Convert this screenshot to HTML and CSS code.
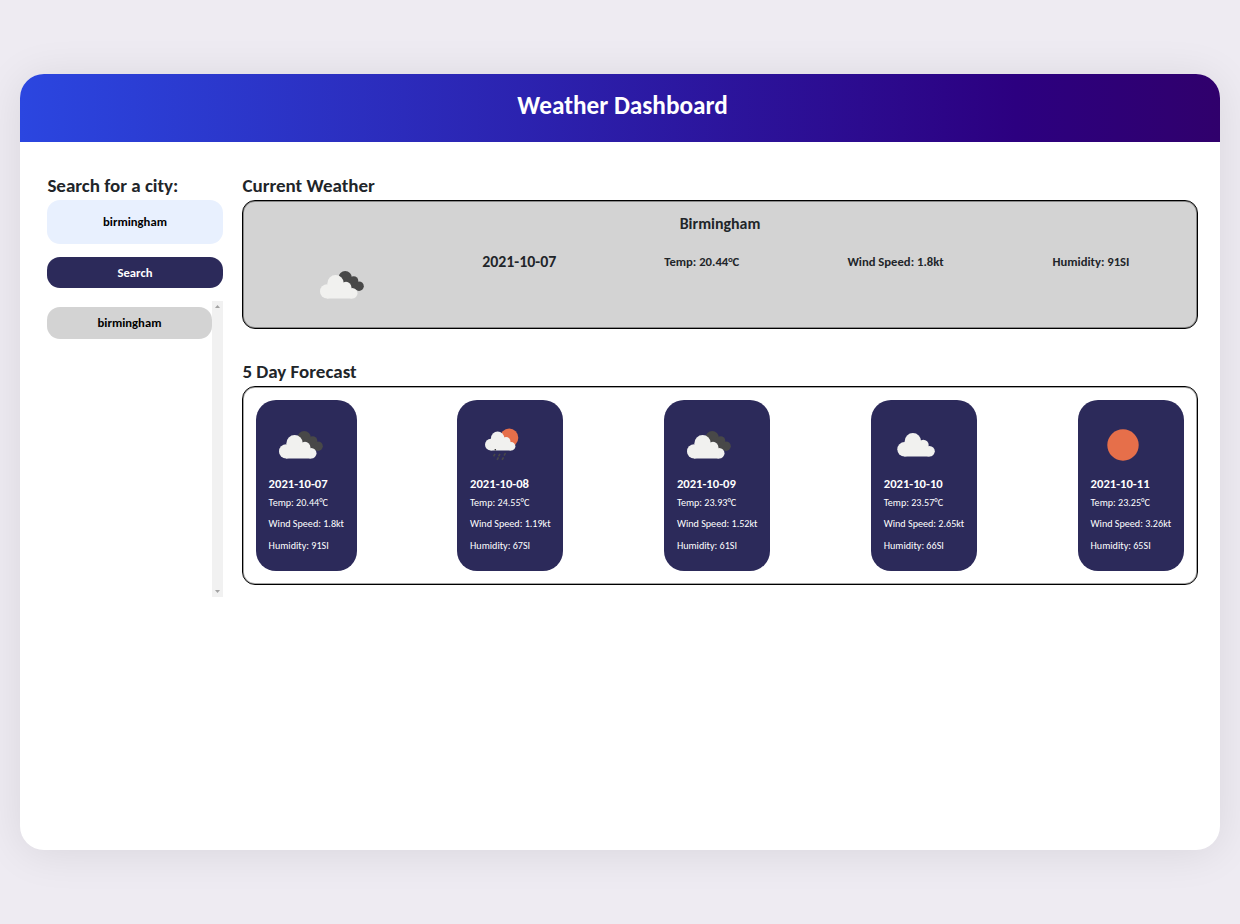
FILE: index.html
```
<!DOCTYPE html>
<html lang="en">
<head>
<meta charset="utf-8">
<title>Weather Dashboard</title>
<link rel="stylesheet" href="styles.css">
</head>
<body>
<svg class="defs" width="0" height="0">
  <defs>
    <g id="cloud">
      <circle cx="17.2" cy="38.4" r="7.2"/><circle cx="25.6" cy="30.3" r="8.2"/><circle cx="36" cy="34.2" r="5.4"/><circle cx="42.2" cy="40.3" r="5.3"/>
      <path d="M17 34H37L42.2 36V45.6H17Z"/>
    </g>
    <g id="clouds">
      <g fill="#484848"><circle cx="35.2" cy="24.8" r="6.7"/><circle cx="43.7" cy="27.8" r="4.6"/><circle cx="49" cy="33.2" r="4.8"/><path d="M35 25L44 25L50 37L42 37Z"/></g>
      <use href="#cloud" fill="#f1f1ef"/>
    </g>
  </defs>
</svg>
<div class="window">
  <header class="header"><h1>Weather Dashboard</h1></header>
  <main class="main">
    <aside class="sidebar">
      <h2 class="heading search-heading">Search for a city:</h2>
      <div class="field">birmingham</div>
      <div class="button">Search</div>
      <div class="history">
        <div class="history-list"><div class="city">birmingham</div></div>
        <div class="scrollbar">
          <svg width="5" height="3" viewBox="0 0 5 3"><path d="M0 3L2.5 0L5 3Z" fill="#a3a3a3"/></svg>
          <svg width="5" height="3" viewBox="0 0 5 3"><path d="M0 0L2.5 3L5 0Z" fill="#a3a3a3"/></svg>
        </div>
      </div>
    </aside>
    <section class="content">
      <h2 class="heading current-heading">Current Weather</h2>
      <div class="current">
        <h3 class="place">Birmingham</h3>
        <div class="current-row">
          <svg class="icon" viewBox="0 0 64 64"><use href="#clouds"/></svg>
          <div class="current-date">2021-10-07</div>
          <div class="stat temp">Temp: 20.44°C</div>
          <div class="stat wind">Wind Speed: 1.8kt</div>
          <div class="stat humidity">Humidity: 91SI</div>
        </div>
      </div>
      <h2 class="heading forecast-heading">5 Day Forecast</h2>
      <div class="forecast">
        <article class="card narrow">
          <svg class="icon" viewBox="0 0 64 64"><use href="#clouds"/></svg>
          <h4>2021-10-07</h4><p>Temp: 20.44°C</p><p>Wind Speed: 1.8kt</p><p>Humidity: 91SI</p>
        </article>
        <article class="card">
          <svg class="icon" viewBox="0 0 64 64"><circle cx="39.2" cy="24.7" r="9.1" fill="#e66f4a"/><use href="#cloud" fill="#f1f1ef" transform="translate(6.9 0.6) scale(.81)"/><g stroke="#484848" stroke-width="1.5"><path d="M25 40.8L23.6 43.4M30 40.8L28.6 43.4M35.5 40L34.1 42.6M28.5 44.3L27.1 46.9M33.5 44.3L32.1 46.9"/></g><circle cx="25.3" cy="36.8" r=".8" fill="#222"/></svg>
          <h4>2021-10-08</h4><p>Temp: 24.55°C</p><p>Wind Speed: 1.19kt</p><p>Humidity: 67SI</p>
        </article>
        <article class="card">
          <svg class="icon" viewBox="0 0 64 64"><use href="#clouds"/></svg>
          <h4>2021-10-09</h4><p>Temp: 23.93°C</p><p>Wind Speed: 1.52kt</p><p>Humidity: 61SI</p>
        </article>
        <article class="card">
          <svg class="icon" viewBox="0 0 64 64"><use href="#cloud" fill="#f1f1ef" transform="translate(3.3 -2.1)"/></svg>
          <h4>2021-10-10</h4><p>Temp: 23.57°C</p><p>Wind Speed: 2.65kt</p><p>Humidity: 66SI</p>
        </article>
        <article class="card">
          <svg class="icon" viewBox="0 0 64 64"><circle cx="32" cy="32" r="15.7" fill="#e66f4a"/></svg>
          <h4>2021-10-11</h4><p>Temp: 23.25°C</p><p>Wind Speed: 3.26kt</p><p>Humidity: 65SI</p>
        </article>
      </div>
    </section>
  </main>
</div>
</body>
</html>
```
FILE: styles.css
```
* { box-sizing: border-box; margin: 0; padding: 0; }
body { height: 924px; padding: 74px 20px; background: #eeebf2; font-family: Carlito, Calibri, Lato, sans-serif; font-weight: 700; color: #212529; white-space: nowrap; overflow: hidden; }
.defs { display: block; }
.window { height: 776px; border-radius: 24px; overflow: hidden; background: #fff; box-shadow: 0 3px 44px rgba(0, 0, 0, .09); }
.header { height: 68.3px; padding: 16px 0 0 5px; background: linear-gradient(90deg, #2b46e0, #2c0080 83%, #30006c); text-align: center; color: #fff; }
h1 { font-size: 25.25px; line-height: 31px; }
.main { display: flex; padding: 33.7px 22px 0 27px; }
.sidebar { width: 176px; margin-right: 19px; }
.heading { padding-left: .4px; font-size: 19px; line-height: 20px; }
.field, .button, .city { display: flex; align-items: center; justify-content: center; color: #000; font-size: 12.65px; }
.field { height: 44px; margin-top: 4px; border-radius: 13px; background: #e8f0fe; }
.button { height: 31.5px; margin-top: 12.8px; border-radius: 13px; background: #2c2a5a; color: #fff; }
.history { display: flex; height: 296.4px; margin-top: 12.7px; }
.history-list { flex: 1; padding-top: 6.2px; }
.city { height: 31.5px; border-radius: 13px; background: #d3d3d3; }
.scrollbar { display: flex; flex-direction: column; justify-content: space-between; align-items: center; width: 11px; padding: 4px 0; background: #f1f1f1; }
.content { flex: 1; }
.current, .forecast { border: 1px solid #000; border-radius: 13px; box-shadow: inset 0 0 0 1px rgba(0, 0, 0, .35); }
.current { height: 128.6px; margin-top: 4px; padding: 0 13px; background: #d3d3d3; }
.place { padding-top: 14.4px; text-align: center; font-size: 15.9px; line-height: 18px; }
.current-row { display: flex; justify-content: space-around; margin-top: 20px; line-height: 18px; }
.current-date { width: 74px; font-size: 15.9px; }
.stat { font-size: 12.65px; }
.temp { width: 75px; }
.wind { width: 97px; }
.humidity { width: 77.4px; }
.current-row .icon { margin-top: -.6px; }
.icon { display: block; width: 64px; height: 64px; }
.forecast-heading { margin-top: 33.6px; }
.forecast { display: flex; justify-content: space-between; height: 198.5px; margin-top: 4.3px; padding: 13px; }
.card { width: 106px; height: 171px; padding: 12.6px; border-radius: 20px; background: #2c2a5a; color: #fff; }
.narrow { width: 100.6px; }
.card h4 { margin-top: -.6px; font-size: 12.65px; line-height: 16px; }
.card p { margin-bottom: 6.5px; font-size: 10.13px; font-weight: 400; line-height: 15px; }
.card h4 + p { margin-top: 2.2px; }
```
